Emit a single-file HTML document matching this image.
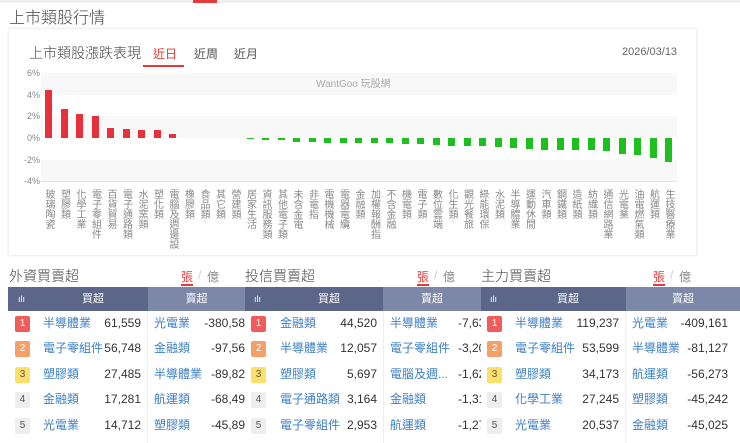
<!DOCTYPE html><html><head><meta charset="utf-8"><style>
*{margin:0;padding:0;box-sizing:border-box}
body{width:740px;height:443px;overflow:hidden;background:#fff;font-family:"Liberation Sans","Noto Sans CJK TC",sans-serif;position:relative;color:#333}
.a{position:absolute;white-space:nowrap}
#plot{position:absolute;left:41px;top:60px;width:636px;height:190px;display:flex}
.c{position:relative;width:15.5px;height:190px}
.c i{position:absolute;left:4.25px;width:7px}
.r{background:#e8313a}.g{background:#1ec01e}
.c span{position:absolute;top:129px;left:2px;writing-mode:vertical-rl;font-size:10px;line-height:11px;color:#888;letter-spacing:0}
.yl{position:absolute;left:22px;font-size:9px;color:#888;width:18px;text-align:right}
.band{position:absolute;left:41px;width:636px;background:#f8f8f8}
.hd{position:absolute;top:287px;height:24px;color:#fff;font-size:11px;line-height:24px}
.row{position:absolute;height:25px;font-size:12px;line-height:25px}
.bd{position:absolute;width:15px;height:16px;border-radius:2px;font-size:10px;line-height:16px;text-align:center}
.b1{background:#f05b5b;color:#fff}.b2{background:#f5a068;color:#fff}.b3{background:#fde06a;color:#555}.b4{background:#eee;color:#555}
.n{color:#3d7fc1}
.v{color:#333;text-align:right}
.t{font-weight:300;color:#444}
</style></head><body>
<div class="a" style="left:0;top:0;width:740px;height:3px;background:#eee"></div>
<div class="a" style="left:193px;top:0;width:24px;height:3px;background:#e53a3a"></div>
<div class="a t" style="left:9px;top:4px;font-size:16px">上市類股行情</div>
<div class="a" style="left:8px;top:28px;width:689px;height:228px;border:1px solid #f0f0f0;border-radius:2px;box-shadow:0 0 3px rgba(0,0,0,.05)"></div>
<div class="a t" style="left:29px;top:43px;font-size:14px">上市類股漲跌表現</div>
<div class="a" style="left:153px;top:45px;font-size:12px;color:#e53a3a">近日</div>
<div class="a" style="left:143px;top:65px;width:41px;height:2px;background:#e53a3a"></div>
<div class="a" style="left:194px;top:45px;font-size:12px;color:#555">近周</div>
<div class="a" style="left:234px;top:45px;font-size:12px;color:#555">近月</div>
<div class="a" style="left:622px;top:46px;font-size:11px;color:#666">2026/03/13</div>
<div class="band" style="top:73px;height:22px"></div>
<div class="band" style="top:116px;height:22px"></div>
<div class="band" style="top:160px;height:21px"></div>
<div class="a" style="left:41px;top:181px;width:636px;height:1px;background:#e4e4e4"></div>
<div class="a" style="left:316px;top:75px;font-size:10px;color:#aaa">WantGoo 玩股網</div>
<div class="yl" style="top:68px">6%</div><div class="yl" style="top:90px">4%</div><div class="yl" style="top:111px">2%</div><div class="yl" style="top:133px">0%</div><div class="yl" style="top:155px">-2%</div><div class="yl" style="top:176px">-4%</div>
<div id="plot">
<div class="c"><i class="r" style="top:30px;height:48px"></i><span>玻璃陶瓷</span></div>
<div class="c"><i class="r" style="top:49px;height:29px"></i><span>塑膠類</span></div>
<div class="c"><i class="r" style="top:54px;height:24px"></i><span>化學工業</span></div>
<div class="c"><i class="r" style="top:56px;height:22px"></i><span>電子零組件</span></div>
<div class="c"><i class="r" style="top:68px;height:10px"></i><span>百貨貿易</span></div>
<div class="c"><i class="r" style="top:69px;height:9px"></i><span>電子通路類</span></div>
<div class="c"><i class="r" style="top:70px;height:8px"></i><span>水泥窯類</span></div>
<div class="c"><i class="r" style="top:70px;height:8px"></i><span>塑化類</span></div>
<div class="c"><i class="r" style="top:74px;height:4px"></i><span>電腦及週邊設</span></div>
<div class="c"><span>橡膠類</span></div>
<div class="c"><span>食品類</span></div>
<div class="c"><span>其它類</span></div>
<div class="c"><span>營建類</span></div>
<div class="c"><i class="g" style="top:78px;height:1px"></i><span>居家生活</span></div>
<div class="c"><i class="g" style="top:78px;height:2px"></i><span>資訊服務類</span></div>
<div class="c"><i class="g" style="top:78px;height:2px"></i><span>其他電子類</span></div>
<div class="c"><i class="g" style="top:78px;height:4px"></i><span>未含金電</span></div>
<div class="c"><i class="g" style="top:78px;height:4px"></i><span>非電指</span></div>
<div class="c"><i class="g" style="top:78px;height:5px"></i><span>電機機械</span></div>
<div class="c"><i class="g" style="top:78px;height:5px"></i><span>電器電纜</span></div>
<div class="c"><i class="g" style="top:78px;height:5px"></i><span>金融類</span></div>
<div class="c"><i class="g" style="top:78px;height:5px"></i><span>加權報酬指</span></div>
<div class="c"><i class="g" style="top:78px;height:5px"></i><span>不含金融</span></div>
<div class="c"><i class="g" style="top:78px;height:6px"></i><span>機電類</span></div>
<div class="c"><i class="g" style="top:78px;height:6px"></i><span>電子類</span></div>
<div class="c"><i class="g" style="top:78px;height:7px"></i><span>數位雲端</span></div>
<div class="c"><i class="g" style="top:78px;height:8px"></i><span>化生類</span></div>
<div class="c"><i class="g" style="top:78px;height:8px"></i><span>觀光餐旅</span></div>
<div class="c"><i class="g" style="top:78px;height:8px"></i><span>綠能環保</span></div>
<div class="c"><i class="g" style="top:78px;height:9px"></i><span>水泥類</span></div>
<div class="c"><i class="g" style="top:78px;height:10px"></i><span>半導體業</span></div>
<div class="c"><i class="g" style="top:78px;height:11px"></i><span>運動休閒</span></div>
<div class="c"><i class="g" style="top:78px;height:12px"></i><span>汽車類</span></div>
<div class="c"><i class="g" style="top:78px;height:12px"></i><span>鋼鐵類</span></div>
<div class="c"><i class="g" style="top:78px;height:12px"></i><span>造紙類</span></div>
<div class="c"><i class="g" style="top:78px;height:12px"></i><span>紡織類</span></div>
<div class="c"><i class="g" style="top:78px;height:13px"></i><span>通信網路業</span></div>
<div class="c"><i class="g" style="top:78px;height:16px"></i><span>光電業</span></div>
<div class="c"><i class="g" style="top:78px;height:17px"></i><span>油電燃氣類</span></div>
<div class="c"><i class="g" style="top:78px;height:20px"></i><span>航運類</span></div>
<div class="c"><i class="g" style="top:78px;height:24px"></i><span>生技醫療業</span></div>
</div>

<div class="a t" style="left:9px;top:266px;font-size:14px">外資買賣超</div>
<div class="a" style="left:181px;top:268px;font-size:12px;color:#e53a3a">張</div><div class="a" style="left:198px;top:268px;font-size:12px;color:#ccc">/</div><div class="a" style="left:207px;top:268px;font-size:12px;color:#888">億</div>
<div class="a" style="left:181px;top:284px;width:12px;height:2px;background:#e53a3a"></div>
<div class="a t" style="left:245px;top:266px;font-size:14px">投信買賣超</div>
<div class="a" style="left:417px;top:268px;font-size:12px;color:#e53a3a">張</div><div class="a" style="left:434px;top:268px;font-size:12px;color:#ccc">/</div><div class="a" style="left:443px;top:268px;font-size:12px;color:#888">億</div>
<div class="a" style="left:417px;top:284px;width:12px;height:2px;background:#e53a3a"></div>
<div class="a t" style="left:481px;top:266px;font-size:14px">主力買賣超</div>
<div class="a" style="left:653px;top:268px;font-size:12px;color:#e53a3a">張</div><div class="a" style="left:670px;top:268px;font-size:12px;color:#ccc">/</div><div class="a" style="left:679px;top:268px;font-size:12px;color:#888">億</div>
<div class="a" style="left:653px;top:284px;width:12px;height:2px;background:#e53a3a"></div>

<div class="hd" style="left:8px;width:140px;background:#5b6689"><span style="position:absolute;left:10px;font-size:9px">ılı</span><span style="position:absolute;left:74px">買超</span></div>
<div class="hd" style="left:148px;width:97px;background:#7d88a8;text-align:center">賣超</div>
<div class="hd" style="left:245px;width:138px;background:#5b6689"><span style="position:absolute;left:9px;font-size:9px">ılı</span><span style="position:absolute;left:73px">買超</span></div>
<div class="hd" style="left:383px;width:98px;background:#7d88a8;text-align:center">賣超</div>
<div class="hd" style="left:481px;width:145px;background:#5b6689"><span style="position:absolute;left:9px;font-size:9px">ılı</span><span style="position:absolute;left:76px">買超</span></div>
<div class="hd" style="left:626px;width:114px;background:#7d88a8;text-align:center">賣超</div>
<div class="a" style="left:147px;top:311px;width:1px;height:132px;background:#eee"></div>
<div class="a" style="left:383px;top:311px;width:1px;height:132px;background:#eee"></div>
<div class="a" style="left:625px;top:311px;width:1px;height:132px;background:#eee"></div>

<div class="bd b1" style="left:15px;top:316px">1</div><div class="bd b2" style="left:15px;top:341px">2</div><div class="bd b3" style="left:15px;top:367px">3</div><div class="bd b4" style="left:15px;top:392px">4</div><div class="bd b4" style="left:15px;top:418px">5</div>
<div class="row n" style="left:43px;top:311px">半導體業</div><div class="row v" style="left:90px;width:51px;top:311px">61,559</div>
<div class="row n" style="left:43px;top:336px">電子零組件</div><div class="row v" style="left:90px;width:51px;top:336px">56,748</div>
<div class="row n" style="left:43px;top:362px">塑膠類</div><div class="row v" style="left:90px;width:51px;top:362px">27,485</div>
<div class="row n" style="left:43px;top:387px">金融類</div><div class="row v" style="left:90px;width:51px;top:387px">17,281</div>
<div class="row n" style="left:43px;top:413px">光電業</div><div class="row v" style="left:90px;width:51px;top:413px">14,712</div>
<div class="row n" style="left:154px;top:311px">光電業</div><div class="row v" style="left:190px;width:55px;top:311px">-380,58</div>
<div class="row n" style="left:154px;top:336px">金融類</div><div class="row v" style="left:190px;width:55px;top:336px">-97,56</div>
<div class="row n" style="left:154px;top:362px">半導體業</div><div class="row v" style="left:190px;width:55px;top:362px">-89,82</div>
<div class="row n" style="left:154px;top:387px">航運類</div><div class="row v" style="left:190px;width:55px;top:387px">-68,49</div>
<div class="row n" style="left:154px;top:413px">塑膠類</div><div class="row v" style="left:190px;width:55px;top:413px">-45,89</div>

<div class="bd b1" style="left:251px;top:316px">1</div><div class="bd b2" style="left:251px;top:341px">2</div><div class="bd b3" style="left:251px;top:367px">3</div><div class="bd b4" style="left:251px;top:392px">4</div><div class="bd b4" style="left:251px;top:418px">5</div>
<div class="row n" style="left:280px;top:311px">金融類</div><div class="row v" style="left:320px;width:57px;top:311px">44,520</div>
<div class="row n" style="left:280px;top:336px">半導體業</div><div class="row v" style="left:320px;width:57px;top:336px">12,057</div>
<div class="row n" style="left:280px;top:362px">塑膠類</div><div class="row v" style="left:320px;width:57px;top:362px">5,697</div>
<div class="row n" style="left:280px;top:387px">電子通路類</div><div class="row v" style="left:320px;width:57px;top:387px">3,164</div>
<div class="row n" style="left:280px;top:413px">電子零組件</div><div class="row v" style="left:320px;width:57px;top:413px">2,953</div>
<div class="row n" style="left:390px;top:311px">半導體業</div><div class="row" style="left:458px;width:23px;top:311px;overflow:hidden">-7,63</div>
<div class="row n" style="left:390px;top:336px">電子零組件</div><div class="row" style="left:458px;width:23px;top:336px;overflow:hidden">-3,20</div>
<div class="row n" style="left:390px;top:362px">電腦及週...</div><div class="row" style="left:458px;width:23px;top:362px;overflow:hidden">-1,62</div>
<div class="row n" style="left:390px;top:387px">金融類</div><div class="row" style="left:458px;width:23px;top:387px;overflow:hidden">-1,31</div>
<div class="row n" style="left:390px;top:413px">航運類</div><div class="row" style="left:458px;width:23px;top:413px;overflow:hidden">-1,27</div>

<div class="bd b1" style="left:487px;top:316px">1</div><div class="bd b2" style="left:487px;top:341px">2</div><div class="bd b3" style="left:487px;top:367px">3</div><div class="bd b4" style="left:487px;top:392px">4</div><div class="bd b4" style="left:487px;top:418px">5</div>
<div class="row n" style="left:515px;top:311px">半導體業</div><div class="row v" style="left:560px;width:59px;top:311px">119,237</div>
<div class="row n" style="left:515px;top:336px">電子零組件</div><div class="row v" style="left:560px;width:59px;top:336px">53,599</div>
<div class="row n" style="left:515px;top:362px">塑膠類</div><div class="row v" style="left:560px;width:59px;top:362px">34,173</div>
<div class="row n" style="left:515px;top:387px">化學工業</div><div class="row v" style="left:560px;width:59px;top:387px">27,245</div>
<div class="row n" style="left:515px;top:413px">光電業</div><div class="row v" style="left:560px;width:59px;top:413px">20,537</div>
<div class="row n" style="left:632px;top:311px">光電業</div><div class="row v" style="left:668px;width:60px;top:311px">-409,161</div>
<div class="row n" style="left:632px;top:336px">半導體業</div><div class="row v" style="left:668px;width:60px;top:336px">-81,127</div>
<div class="row n" style="left:632px;top:362px">航運類</div><div class="row v" style="left:668px;width:60px;top:362px">-56,273</div>
<div class="row n" style="left:632px;top:387px">塑膠類</div><div class="row v" style="left:668px;width:60px;top:387px">-45,242</div>
<div class="row n" style="left:632px;top:413px">金融類</div><div class="row v" style="left:668px;width:60px;top:413px">-45,025</div>
</body></html>
